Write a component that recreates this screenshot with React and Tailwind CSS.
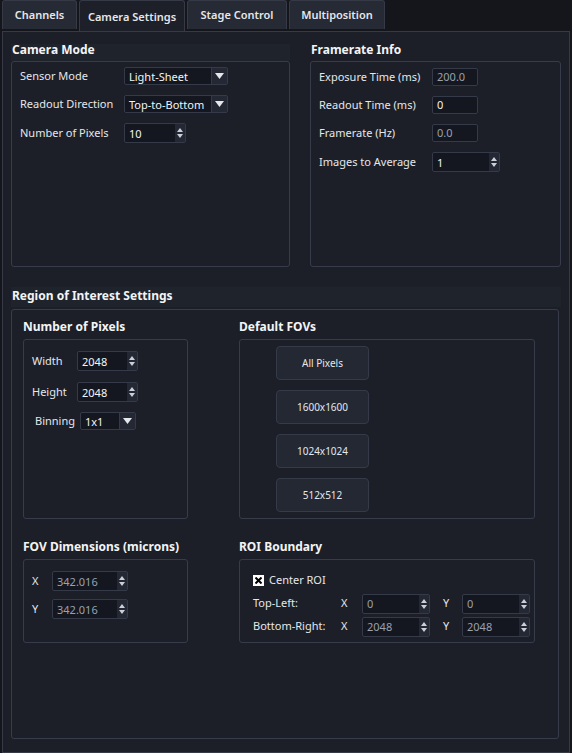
import React from 'react';

const font = { fontFamily: '"Noto Sans", "Open Sans", sans-serif' };

const Arrow = () => (
  <svg width="9" height="6" viewBox="0 0 9 6"><path d="M0 0h9L4.5 6z" fill="#e5e7eb" /></svg>
);

const Combo = ({ value, w = 'w-[104px]' }) => (
  <div className={`flex items-center h-[18px] ${w} bg-[#141720] border border-[#343a48] rounded-[2px]`}>
    <span className="flex-1 pl-1 text-[11px] text-gray-100 leading-none">{value}</span>
    <span className="w-[16px] h-full flex items-center justify-center bg-[#232834] border-l border-[#343a48]"><Arrow /></span>
  </div>
);

const Spin = ({ value, w = 'w-[62px]', dim }) => (
  <div className={`flex items-center h-[20px] ${w} bg-[#141720] border border-[#343a48] rounded-[2px]`}>
    <span className={`flex-1 pl-1 text-[11px] leading-none ${dim ? 'text-gray-400' : 'text-gray-100'}`}>{value}</span>
    <span className="w-[10px] h-full flex flex-col items-center justify-center gap-[2px] bg-[#232834]">
      <svg width="6" height="4" viewBox="0 0 6 4"><path d="M0 4L3 0l3 4z" fill="#cbd0d8" /></svg>
      <svg width="6" height="4" viewBox="0 0 6 4"><path d="M0 0h6L3 4z" fill="#cbd0d8" /></svg>
    </span>
  </div>
);

const Field = ({ value, w = 'w-[46px]', dim }) => (
  <div className={`flex items-center h-[18px] ${w} bg-[#141720] border border-[#343a48] rounded-[2px] pl-1 text-[11px] ${dim ? 'text-gray-400' : 'text-gray-100'}`}>{value}</div>
);

const Box = ({ className = '', children }) => (
  <div className={`border border-[#363c4a] rounded-[3px] ${className}`}>{children}</div>
);

const Title = ({ children, className = '' }) => (
  <div className={`text-[12px] font-bold text-gray-100 leading-none ${className}`}>{children}</div>
);

const Row = ({ label, lw, children, className = '' }) => (
  <div className={`flex items-center ${className}`}>
    <span className={`${lw} text-[11px] text-gray-200`}>{label}</span>
    {children}
  </div>
);

const tabs = ['Channels', 'Camera Settings', 'Stage Control', 'Multiposition'];
const tabW = ['w-[75px]', 'w-[106px]', 'w-[100px]', 'w-[96px]'];

export default function App() {
  return (
    <div style={font} className="w-[572px] h-[753px] bg-[#14161c] flex flex-col overflow-hidden">
      {/* Tabs */}
      <div className="flex gap-[2px] pl-[2px] h-[31px] items-end">
        {tabs.map((t, i) => (
          <div key={t} className={`${tabW[i]} ${i === 1 ? 'h-[31px] bg-[#1d2029] pt-[2px]' : 'h-[29px] bg-[#262a34] mb-[2px]'} border border-[#353a46] border-b-0 rounded-t-[3px] flex items-center justify-center text-[11px] font-semibold text-gray-200`}>{t}</div>
        ))}
      </div>
      {/* Panel */}
      <div className="flex-1 mx-[2px] bg-[#1c1f27] border border-[#353a46] pt-[12px] px-[8px]">
        <div className="flex gap-[20px]">
          <div className="w-[279px]">
            <Title className="pl-[1px] pb-[5px] bg-[#1f232c]">Camera Mode</Title>
            <Box className="h-[206px] pt-[5px] px-[8px] flex flex-col gap-[10px]">
              <Row label="Sensor Mode" lw="w-[104px]"><Combo value="Light-Sheet" /></Row>
              <Row label="Readout Direction" lw="w-[104px]"><Combo value="Top-to-Bottom" /></Row>
              <Row label="Number of Pixels" lw="w-[104px]"><Spin value="10" /></Row>
            </Box>
          </div>
          <div className="w-[251px]">
            <Title className="pl-[1px] pb-[5px]">Framerate Info</Title>
            <Box className="h-[206px] pt-[6px] px-[8px] flex flex-col gap-[10px]">
              <Row label="Exposure Time (ms)" lw="w-[113px]"><Field value="200.0" dim /></Row>
              <Row label="Readout Time (ms)" lw="w-[113px]"><Field value="0" /></Row>
              <Row label="Framerate (Hz)" lw="w-[113px]"><Field value="0.0" dim /></Row>
              <Row label="Images to Average" lw="w-[113px]"><Spin value="1" w="w-[68px]" /></Row>
            </Box>
          </div>
        </div>

        <div className="mt-[20px] w-[550px] bg-[#1f232c] pt-[3px]">
          <Title className="pl-[1px] pb-[5px]">Region of Interest Settings</Title>
        </div>
        <Box className="mt-[2px] w-[548px] h-[430px] px-[11px] pt-[11px]">
          <div className="flex gap-[51px]">
            <div className="w-[165px]">
              <Title className="pb-[6px]">Number of Pixels</Title>
              <Box className="h-[180px] pl-[8px] pt-[11px] flex flex-col">
                <Row label="Width" lw="w-[45px]"><Spin value="2048" w="w-[61px]" /></Row>
                <Row label="Height" lw="w-[45px]" className="mt-[11px]"><Spin value="2048" w="w-[61px]" /></Row>
                <Row label="Binning" lw="w-[48px] pl-[3px]" className="mt-[10px]"><Combo value="1x1" w="w-[56px]" /></Row>
              </Box>
            </div>
            <div className="w-[296px]">
              <Title className="pb-[6px]">Default FOVs</Title>
              <Box className="h-[180px] pl-[36px] pt-[6px] flex flex-col gap-[10px]">
                {['All Pixels', '1600x1600', '1024x1024', '512x512'].map(b => (
                  <div key={b} className="w-[93px] h-[34px] bg-[#232833] border border-[#343a47] rounded-[4px] flex items-center justify-center text-[10px] text-gray-200">{b}</div>
                ))}
              </Box>
            </div>
          </div>
          <div className="flex gap-[51px] mt-[22px]">
            <div className="w-[165px]">
              <Title className="pb-[6px]">FOV Dimensions (microns)</Title>
              <Box className="h-[84px] pl-[8px] pt-[11px] flex flex-col gap-[8px]">
                <Row label="X" lw="w-[20px]"><Spin value="342.016" w="w-[76px]" dim /></Row>
                <Row label="Y" lw="w-[20px]"><Spin value="342.016" w="w-[76px]" dim /></Row>
              </Box>
            </div>
            <div className="w-[296px]">
              <Title className="pb-[6px]">ROI Boundary</Title>
              <Box className="h-[84px] pl-[13px] pt-[12px] flex flex-col">
                <div className="flex items-center gap-[5px] text-[11px] text-gray-200">
                  <span className="w-[11px] h-[11px] bg-white flex items-center justify-center">
                    <svg width="7" height="7" viewBox="0 0 7 7"><path d="M0.5 0.5l6 6M6.5 0.5l-6 6" stroke="#000" strokeWidth="2" /></svg>
                  </span>
                  Center ROI
                </div>
                <div className="flex items-center mt-[5px] text-[11px] text-gray-200">
                  <span className="w-[88px]">Top-Left:</span>
                  <span className="w-[21px]">X</span><Spin value="0" w="w-[68px]" dim />
                  <span className="w-[32px] pl-[13px]">Y</span><Spin value="0" w="w-[68px]" dim />
                </div>
                <div className="flex items-center mt-[3px] text-[11px] text-gray-200">
                  <span className="w-[88px]">Bottom-Right:</span>
                  <span className="w-[21px]">X</span><Spin value="2048" w="w-[68px]" dim />
                  <span className="w-[32px] pl-[13px]">Y</span><Spin value="2048" w="w-[68px]" dim />
                </div>
              </Box>
            </div>
          </div>
        </Box>
      </div>
    </div>
  );
}
